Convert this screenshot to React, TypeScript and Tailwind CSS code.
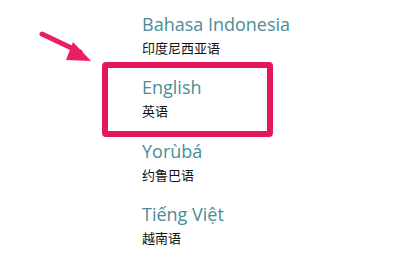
export default function App() {
  const langs = [
    { name: 'Bahasa Indonesia', local: '印度尼西亚语' },
    { name: 'English', local: '英语' },
    { name: 'Yorùbá', local: '约鲁巴语' },
    { name: 'Tiếng Việt', local: '越南语' },
  ]

  return (
    <div className="relative w-[395px] h-[263px] overflow-hidden bg-white">
      <div className="flex flex-col pl-[142px] pt-[13px]">
        {langs.map((l, i) => (
          <div key={l.name} className={i === 1 ? 'h-[64px] flex flex-col' : 'h-[63px] flex flex-col'}>
            <div
              className="text-[18px] leading-[22px] text-[#4a8d99]"
              style={{ fontFamily: '"Open Sans", "Noto Sans", sans-serif' }}
            >
              {l.name}
            </div>
            <div
              className="mt-[5px] text-[13px] leading-[16px] text-[#111]"
              style={{ fontFamily: '"Noto Sans CJK SC", sans-serif' }}
            >
              {l.local}
            </div>
          </div>
        ))}
      </div>

      {/* highlight box */}
      <div className="absolute left-[102px] top-[62px] w-[171px] h-[75px] border-[6px] border-[#e3185c] rounded-[4px]" />

      {/* arrow */}
      <svg className="absolute left-[38px] top-[28px]" width="60" height="40" viewBox="0 0 60 40">
        <line x1="4" y1="6" x2="42" y2="24" stroke="#e8205f" strokeWidth="5" strokeLinecap="round" />
        <polygon points="35,14 53,33 28,32" fill="#e8205f" />
      </svg>
    </div>
  )
}
